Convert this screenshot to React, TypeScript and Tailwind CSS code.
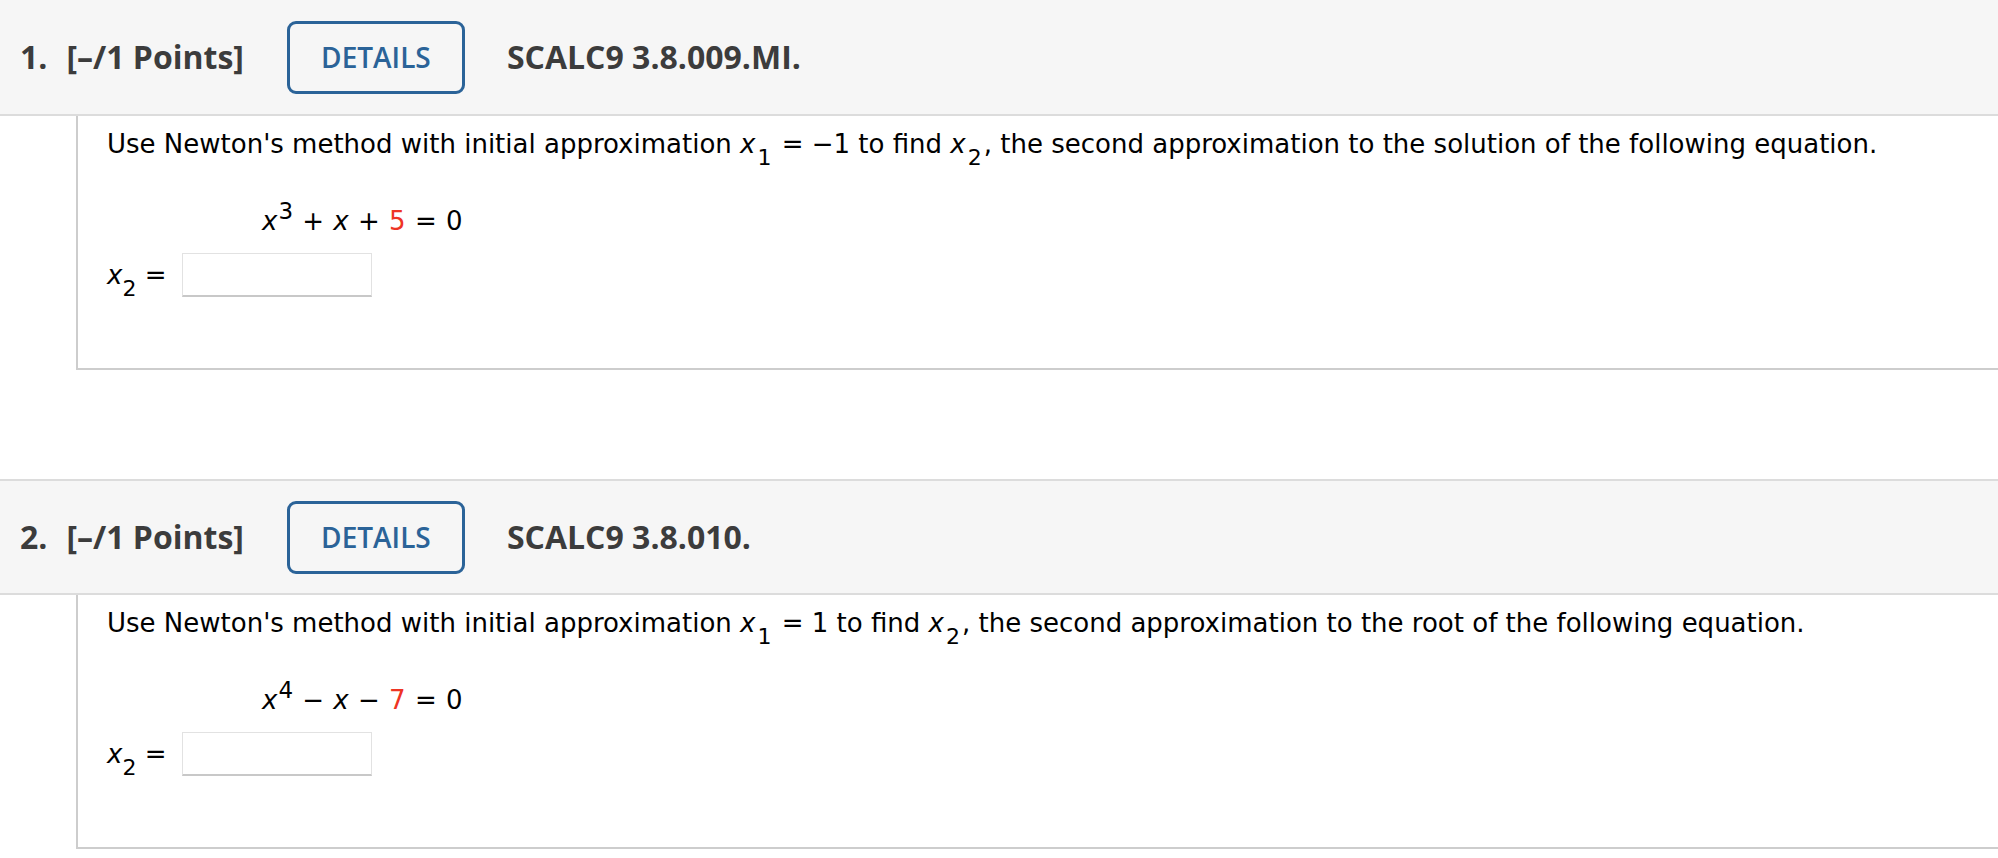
import React from "react";

type QuestionProps = {
  number: number;
  code: string;
  first?: boolean;
  intro: React.ReactNode;
  equation: React.ReactNode;
};

const sans = "font-['DejaVu_Sans','Verdana',sans-serif]";
const heading = "font-['Open_Sans','Liberation_Sans',sans-serif]";

function X({ sub, tight }: { sub?: string; tight?: boolean }) {
  return (
    <span className="whitespace-nowrap">
      <i>x</i>
      {sub ? (
        <span className={`relative top-[12px] text-[22px] not-italic ${tight ? "" : "px-[2px]"}`}>{sub}</span>
      ) : null}
    </span>
  );
}

function Question({ number, code, first, intro, equation }: QuestionProps) {
  return (
    <section>
      <div
        className={`flex items-center bg-[#f6f6f6] border-b-2 border-[#dcdcdc] ${
          first ? "h-[116px]" : "h-[116px] border-t-2"
        } ${heading} text-[#3c3c3c]`}
      >
        <span className="ml-[20px] text-[32px] font-bold">{number}.</span>
        <span className="ml-[19px] text-[32px] font-bold">[–/1 Points]</span>
        <button
          type="button"
          className="ml-[43px] flex h-[73px] w-[178px] items-center justify-center rounded-[9px] border-[3px] border-[#2b6398] text-[28px] font-semibold text-[#2b6398]"
        >
          DETAILS
        </button>
        <span className="ml-[42px] text-[32px] font-bold">{code}</span>
      </div>

      <div className={`ml-[76px] h-[254px] border-b-2 border-l-2 border-[#cdcdcd] pl-[29px] pt-[13px] text-[26px] leading-[30px] text-black ${sans}`}>
        <p className="whitespace-nowrap">{intro}</p>
        <p className="ml-[155px] mt-[45px] whitespace-nowrap [word-spacing:1px]">{equation}</p>
        <div className="mt-[16px] flex items-start">
          <span className="mt-[7px] whitespace-nowrap">
            <X sub="2" tight /> =
          </span>
          <input
            type="text"
            className="ml-[16px] h-[44px] w-[190px] border border-b-2 border-[#e2e2e2] border-b-[#c8c8c8] bg-white outline-none"
          />
        </div>
      </div>
    </section>
  );
}

export default function App() {
  return (
    <div className="min-h-screen w-full bg-white">
      <Question
        first
        number={1}
        code="SCALC9 3.8.009.MI."
        intro={
          <>
            Use Newton's method with initial approximation <X sub="1" /> = −1 to find <X sub="2" />, the second
            approximation to the solution of the following equation.
          </>
        }
        equation={
          <>
            <i>x</i>
            <span className="relative -top-[11px] pl-[1px] text-[23px]">3</span> + <i>x</i> +{" "}
            <span className="text-[#ee3424]">5</span> = 0
          </>
        }
      />
      <div className="h-[109px]" />
      <Question
        number={2}
        code="SCALC9 3.8.010."
        intro={
          <>
            Use Newton's method with initial approximation <X sub="1" /> = 1 to find <X sub="2" />, the second
            approximation to the root of the following equation.
          </>
        }
        equation={
          <>
            <i>x</i>
            <span className="relative -top-[11px] pl-[1px] text-[23px]">4</span> − <i>x</i> −{" "}
            <span className="text-[#ee3424]">7</span> = 0
          </>
        }
      />
    </div>
  );
}
